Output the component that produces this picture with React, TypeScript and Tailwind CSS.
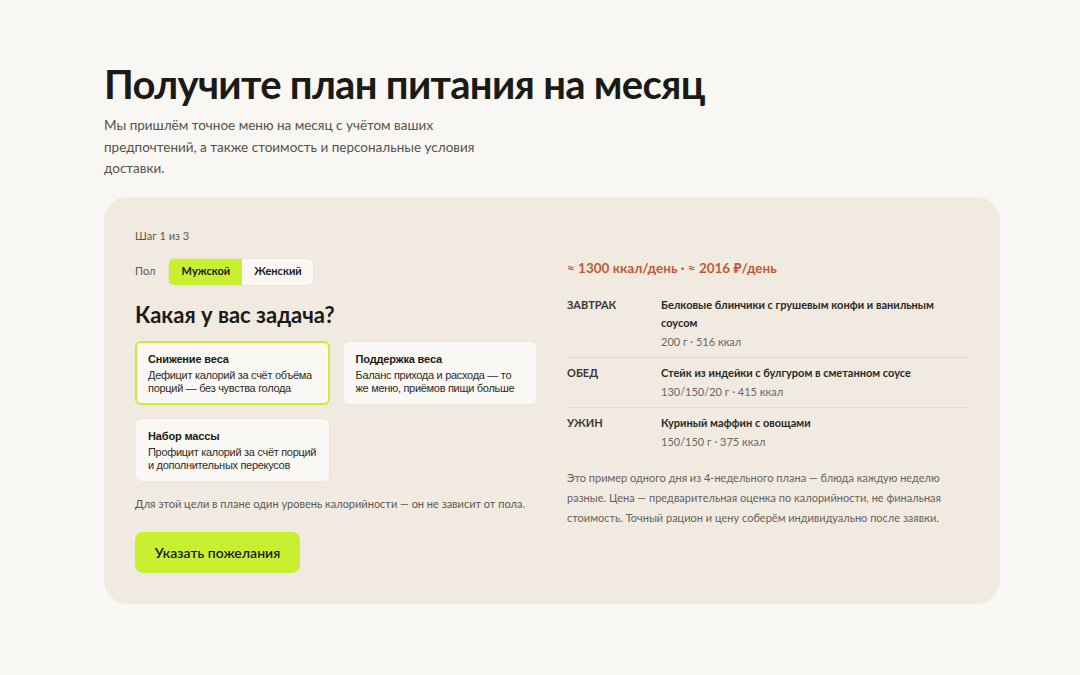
const goals = [
  { title: 'Снижение веса', lines: ['Дефицит калорий за счёт объёма', 'порций — без чувства голода'], active: true },
  { title: 'Поддержка веса', lines: ['Баланс прихода и расхода — то', 'же меню, приёмов пищи больше'], active: false },
  { title: 'Набор массы', lines: ['Профицит калорий за счёт порций', 'и дополнительных перекусов'], active: false },
]

const meals = [
  { name: 'ЗАВТРАК', dish: 'Белковые блинчики с грушевым конфи и ванильным соусом', meta: '200 г · 516 ккал' },
  { name: 'ОБЕД', dish: 'Стейк из индейки с булгуром в сметанном соусе', meta: '130/150/20 г · 415 ккал' },
  { name: 'УЖИН', dish: 'Куриный маффин с овощами', meta: '150/150 г · 375 ккал' },
]

export default function App() {
  return (
    <div className="min-h-[675px] w-full bg-[#f9f7f3] font-['Lato','Noto_Sans',sans-serif] text-[#1b1a16]">
      <div className="ml-[104px] w-[896px] pt-[61px]">
        <h1 className="text-[40px] font-bold leading-[46px] tracking-[-0.7px]">Получите план питания на месяц</h1>
        <p className="mt-[8px] w-[375px] text-[13.5px] leading-[21.5px] text-[#55524c]">
          Мы пришлём точное меню на месяц с учётом ваших предпочтений, а также стоимость и персональные условия
          доставки.
        </p>

        <div className="mt-[17px] grid grid-cols-2 gap-[30px] rounded-[24px] bg-[#f1eae1] px-[31px] pb-[31px] pt-[32px]">
          <div>
            <div className="text-[11px] leading-[14px] text-[#5d5952]">Шаг 1 из 3</div>
            <div className="mt-[15px] flex items-center gap-[13px]">
              <span className="text-[11px] text-[#5d5952]">Пол</span>
              <div className="flex h-[28px] overflow-hidden rounded-[6px] border border-[#e9e3da] bg-[#faf8f4]">
                <button className="w-[73px] bg-[#c8f031] text-[11px] font-bold text-[#1b1a16]">Мужской</button>
                <button className="w-[71px] text-[11px] font-bold text-[#1b1a16]">Женский</button>
              </div>
            </div>
            <h2 className="mt-[14px] text-[22px] font-bold leading-[30px]">Какая у вас задача?</h2>
            <div className="mt-[11px] grid grid-cols-2 gap-[13px] font-['Liberation_Sans',Arial,sans-serif]">
              {goals.map((g) => (
                <div
                  key={g.title}
                  className={
                    g.active
                      ? 'h-[64px] rounded-[6px] border-2 border-[#c8f031] bg-[#faf8f4] px-[11px] pt-[9px]'
                      : 'h-[64px] rounded-[6px] border border-[#ebe5dc] bg-[#faf8f4] px-[12px] pt-[10px]'
                  }
                >
                  <div className="text-[11px] font-bold leading-[15px] tracking-[-0.15px]">{g.title}</div>
                  <div className="mt-[2px] text-[11px] leading-[13.5px] tracking-[-0.3px] text-[#2d2b27]">
                    {g.lines.map((l) => (
                      <div key={l} className="whitespace-nowrap">
                        {l}
                      </div>
                    ))}
                  </div>
                </div>
              ))}
            </div>
            <p className="mt-[14px] text-[11px] leading-[16px] text-[#5d5952]">
              Для этой цели в плане один уровень калорийности — он не зависит от пола.
            </p>
            <button className="mt-[20px] h-[41px] w-[165px] rounded-[8px] bg-[#c8f031] text-[14px] font-semibold text-[#1b1a16]">
              Указать пожелания
            </button>
          </div>

          <div className="pt-[29px]">
            <div className="text-[13.5px] font-bold leading-[20px] text-[#c05a38]">≈ 1300 ккал/день · ≈ 2016 ₽/день</div>
            <div className="mt-[18px]">
              {meals.map((m, i) => (
                <div
                  key={m.name}
                  className={
                    i < meals.length - 1
                      ? 'mb-[6px] flex border-b border-[#e2dbd1] pb-[6px]'
                      : 'flex'
                  }
                >
                  <div className="w-[94px] shrink-0 text-[11px] font-bold leading-[18px] text-[#3b3833]">{m.name}</div>
                  <div className="flex-1 pr-[20px]">
                    <div className="text-[11px] font-bold leading-[18px] text-[#2b2925]">{m.dish}</div>
                    <div className="mt-[1px] text-[11px] leading-[18px] text-[#6b675f]">{m.meta}</div>
                  </div>
                </div>
              ))}
            </div>
            <p className="mt-[17px] text-[11px] leading-[20px] text-[#67635b]">
              Это пример одного дня из 4-недельного плана — блюда каждую неделю разные. Цена — предварительная оценка
              по калорийности, не финальная стоимость. Точный рацион и цену соберём индивидуально после заявки.
            </p>
          </div>
        </div>
      </div>
    </div>
  )
}
